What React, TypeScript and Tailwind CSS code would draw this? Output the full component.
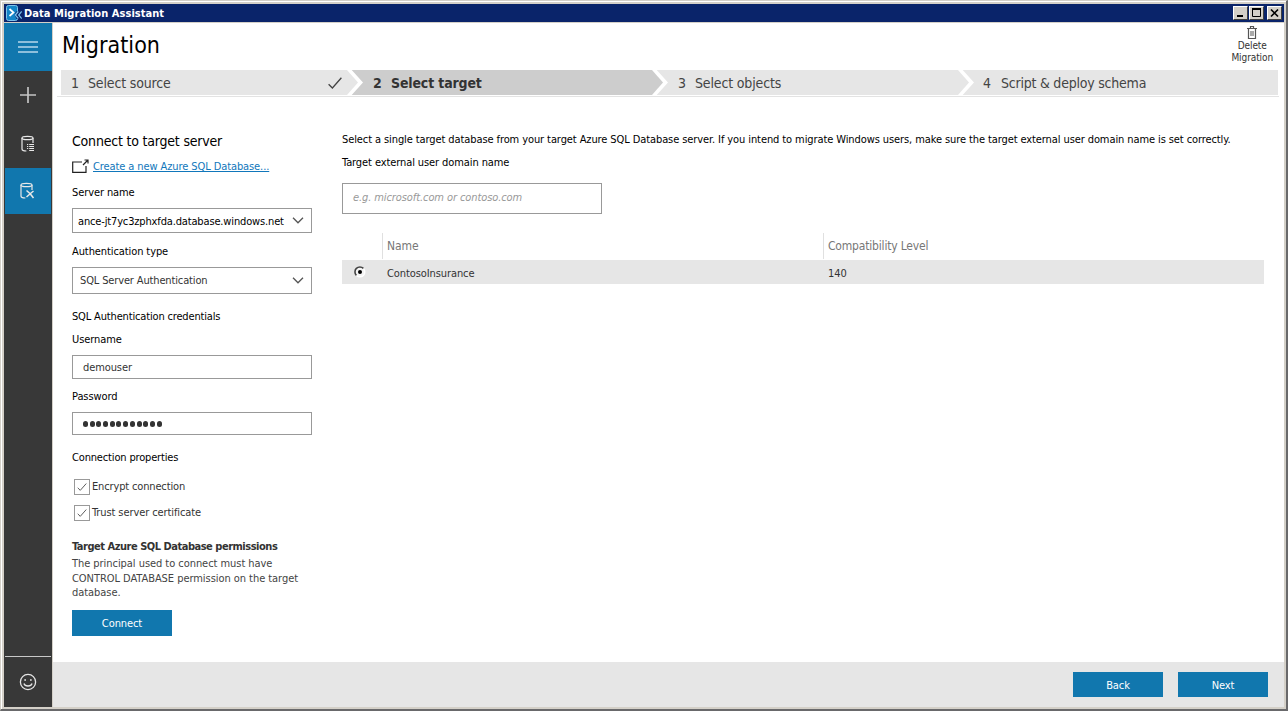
import React from "react";

const Check = ({ className = "" }: { className?: string }) => (
  <svg className={className} viewBox="0 0 14 12" fill="none" stroke="currentColor" strokeWidth="1.3">
    <path d="M0.6 7.2 L4.4 11 L13.4 0.8" />
  </svg>
);

const ChevronDown = () => (
  <svg className="h-[7px] w-[12px] shrink-0 text-[#555]" viewBox="0 0 12 7" fill="none" stroke="currentColor" strokeWidth="1.3">
    <path d="M1 0.8 L6 5.8 L11 0.8" />
  </svg>
);

const Divider = ({ left, right }: { left: string; right: string }) => (
  <svg className="h-[25px] w-[17px] shrink-0" viewBox="0 0 17 25">
    <path d="M0 0 L1 0 L12 12.5 L1 25 L0 25 Z" fill={left} />
    <path d="M5.7 0 H17 V25 H5.7 L17 12.5 Z" fill={right} />
  </svg>
);

const Database = ({ children }: { children: React.ReactNode }) => (
  <svg className="h-[18px] w-[16px]" viewBox="0 0 16 18" fill="none" stroke="#e8e8e8" strokeWidth="1.2">
    <ellipse cx="7.5" cy="3" rx="5.5" ry="1.7" />
    <path d="M2 3 V14 C2 15.4 4 16 6.4 16 M13 3 V8" />
    {children}
  </svg>
);

const Label = ({ className = "", children }: { className?: string; children: React.ReactNode }) => (
  <div className={`flex h-4 items-center whitespace-nowrap ${className}`}>{children}</div>
);

const CheckRow = ({ className = "", children }: { className?: string; children: React.ReactNode }) => (
  <div className={`ml-[2px] flex h-4 items-center text-[#333] ${className}`}>
    <span className="flex h-4 w-4 items-center justify-center border border-[#999]">
      <Check className="h-[8px] w-[10px] text-[#444]" />
    </span>
    <span className="ml-[2px] whitespace-nowrap">{children}</span>
  </div>
);

const WinButton = ({ className = "", children }: { className?: string; children: React.ReactNode }) => (
  <button
    className={`flex h-[14px] w-[15px] items-center justify-center border border-t-white border-r-[#404040] border-b-[#404040] border-l-white bg-[#d4d0c8] ${className}`}
  >
    {children}
  </button>
);

export default function App() {
  return (
    <div className="flex h-[711px] w-[1288px] flex-col overflow-hidden border-t border-r-2 border-b-2 border-l border-t-[#d4d0c8] border-r-[#69696b] border-b-[#69696b] border-l-[#d4d0c8] font-['DejaVu_Sans_Condensed','DejaVu_Sans',sans-serif] text-[11px] leading-[14px] tracking-[-0.095px] text-black">
      <div className="flex min-h-0 flex-1 flex-col border-t border-l border-white">
        <div className="flex min-h-0 flex-1 flex-col border-2 border-[#d4d0c8]">
          <header className="flex h-[18px] shrink-0 items-center bg-[#0a246a] pr-[2px] pl-[2px]">
            <svg className="h-4 w-4 shrink-0" viewBox="0 0 16 16" fill="none">
              <rect x="0.5" y="0.5" width="11" height="15" rx="2" fill="#1485c7" stroke="#7fc4ec" />
              <path d="M10 6.5 H16 V14 H10.5 L8.5 10 Z" fill="#0a246a" />
              <path d="M3.5 4 L7.5 7.5 L3.5 11" stroke="#fff" strokeWidth="1.7" />
              <path d="M12.3 6.5 L9.3 10 L12.3 13.5 M15.7 6.5 L12.7 10 L15.7 13.5" stroke="#79c3ec" strokeWidth="1.2" />
            </svg>
            <span className="ml-[2px] flex-1 pt-px text-[11px] font-bold tracking-[0.05px] whitespace-nowrap text-white">Data Migration Assistant</span>
            <WinButton>
              <svg className="h-[10px] w-[11px]" viewBox="0 0 11 10">
                <path d="M2 8 H8" stroke="#000" strokeWidth="2" />
              </svg>
            </WinButton>
            <WinButton className="ml-px">
              <svg className="h-[10px] w-[11px]" viewBox="0 0 11 10" fill="none" stroke="#000">
                <path d="M1.5 1 V8.5 H9.5 V1" />
                <path d="M1 1 H10" strokeWidth="2" />
              </svg>
            </WinButton>
            <WinButton className="ml-[3px]">
              <svg className="h-[10px] w-[11px]" viewBox="0 0 11 10">
                <path d="M2 1.5 L9 8.5 M9 1.5 L2 8.5" stroke="#000" strokeWidth="1.7" />
              </svg>
            </WinButton>
          </header>

          <div className="flex min-h-0 flex-1 border-t border-[#d4d0c8]">
            <nav className="flex w-12 shrink-0 flex-col bg-[#383838]">
              <button className="flex h-12 items-center justify-center bg-[#1177ae]">
                <svg className="h-3 w-5" viewBox="0 0 20 12" stroke="#8dbfdc" strokeWidth="2">
                  <path d="M0 1 H20 M0 6 H20 M0 11 H20" />
                </svg>
              </button>
              <button className="flex h-12 items-center justify-center">
                <svg className="h-4 w-4" viewBox="0 0 16 16" stroke="#c4c4c4" strokeWidth="1.7">
                  <path d="M8 0 V16 M0 8 H16" />
                </svg>
              </button>
              <button className="flex h-[49px] items-center justify-center">
                <Database>
                  <path d="M7 9.5 H8.2 M9.2 9.5 H14 M7 11.5 H8.2 M9.2 11.5 H14 M7 13.5 H8.2 M9.2 13.5 H14 M9.2 15.5 H14" strokeWidth="1" />
                </Database>
              </button>
              <button className="mx-px flex h-[46px] items-center justify-center bg-[#1177ae] pr-[2px]">
                <Database>
                  <path d="M7.5 8.5 L11.2 11.8 L7.5 15 M14.5 9 L11.2 11.8 L14.5 16" strokeWidth="1.5" />
                </Database>
              </button>
              <div className="mx-px mt-auto border-t border-[#c8c8c8]" />
              <button className="flex h-[50px] items-center justify-center">
                <svg className="h-[18px] w-[18px]" viewBox="0 0 18 18" fill="none" stroke="#e4e4e4" strokeWidth="1.3">
                  <circle cx="9" cy="9" r="7.6" />
                  <path d="M4.9 10.5 C6 13.8 12 13.8 13.1 10.5" />
                  <path d="M5.3 7 H7 M11 7 H12.7" strokeWidth="1.7" />
                </svg>
              </button>
            </nav>

            <div className="flex min-w-0 flex-1 flex-col border-l border-[#d4d0c8] bg-white">
              <div className="flex h-[47px] shrink-0 justify-between pr-[11px] pl-[9px]">
                <h1 className="pt-[6px] text-[23px] leading-8 tracking-[0.05px] whitespace-nowrap">Migration</h1>
                <button className="flex flex-col items-center pt-[3px] text-[10px] leading-[12px] text-[#333]">
                  <svg className="mb-px h-[13px] w-[10px]" viewBox="0 0 10 13" fill="none" stroke="#555">
                    <path d="M0 2.5 H10 M3.5 2 V0.5 H6.5 V2 M1.5 2.5 V12.5 H8.5 V2.5" strokeWidth="1.2" />
                    <path d="M4 5 V10 M6 5 V10" />
                  </svg>
                  <span>Delete</span>
                  <span>Migration</span>
                </button>
              </div>

              <div className="mr-[5px] ml-1 border-b border-[#e3e3e3] pb-px">
                <ol className="mr-px ml-1 flex h-[25px] text-[14px] leading-[26px] tracking-[-0.22px] whitespace-nowrap text-[#444]">
                  <li className="flex w-[285px] items-center bg-[#e6e6e6] pl-[10px]">
                    <span className="w-[17px]">1</span>
                    <span className="flex-1 tracking-[-0.15px]">Select source</span>
                    <Check className="mr-[4px] h-[12px] w-[14px]" />
                  </li>
                  <Divider left="#e6e6e6" right="#cdcdcd" />
                  <li className="flex w-[288px] bg-[#cdcdcd] pl-[10px] font-bold text-[#333]">
                    <span className="w-[18px]">2</span>
                    <span className="tracking-[-0.15px]">Select target</span>
                  </li>
                  <Divider left="#cdcdcd" right="#e6e6e6" />
                  <li className="flex w-[289px] bg-[#e6e6e6] pl-[10px]">
                    <span className="w-[17px]">3</span>
                    <span className="tracking-[-0.15px]">Select objects</span>
                  </li>
                  <Divider left="#e6e6e6" right="#e6e6e6" />
                  <li className="flex flex-1 bg-[#e6e6e6] pl-[9px]">
                    <span className="w-[18px]">4</span>
                    <span>Script &amp; deploy schema</span>
                  </li>
                </ol>
              </div>

              <main className="flex min-h-0 flex-1 pl-[19px]">
                <section className="flex w-[240px] shrink-0 flex-col pt-[34px]">
                  <h2 className="flex h-5 items-center text-[14px] tracking-[-0.2px] whitespace-nowrap">Connect to target server</h2>
                  <div className="mt-[8px] flex h-4 items-center">
                    <svg className="-mt-px h-[15px] w-[17px]" viewBox="0 0 17 15" fill="none" stroke="#222" strokeWidth="1.2">
                      <path d="M10 3 H0.7 V13.4 H14 V7" />
                      <path d="M11 6 L16 1 M12.5 1 H16 V4.5" />
                    </svg>
                    <a className="ml-1 whitespace-nowrap text-[#1177bb] underline">Create a new Azure SQL Database...</a>
                  </div>
                  <Label className="mt-[10px]">Server name</Label>
                  <div className="mt-[7px] flex h-[25px] items-center justify-between border border-[#999] pr-[7px] pl-[5px]">
                    <span className="pt-[2px] tracking-[-0.15px] whitespace-nowrap">ance-jt7yc3zphxfda.database.windows.net</span>
                    <ChevronDown />
                  </div>
                  <Label className="mt-[11px]">Authentication type</Label>
                  <div className="mt-[7px] flex h-[27px] items-center justify-between border border-[#999] pr-[7px] pl-[7px] text-[#333]">
                    <span className="pt-px tracking-[-0.14px] whitespace-nowrap">SQL Server Authentication</span>
                    <ChevronDown />
                  </div>
                  <Label className="mt-[15px] tracking-[-0.16px]">SQL Authentication credentials</Label>
                  <Label className="mt-[7px]">Username</Label>
                  <div className="mt-[7px] flex h-6 items-center border border-[#999] pt-[2px] pl-[10px] text-[#333]">demouser</div>
                  <Label className="mt-[10px]">Password</Label>
                  <div className="mt-[7px] flex h-[23px] items-center gap-[1.7px] border border-[#999] pl-[10px]">
                    {Array.from({ length: 12 }, (_, i) => (
                      <span key={i} className="h-[6px] w-[5px] rounded-full bg-[#333]" />
                    ))}
                  </div>
                  <Label className="mt-[15px] tracking-[-0.16px]">Connection properties</Label>
                  <CheckRow className="mt-[13px] tracking-[-0.15px]">Encrypt connection</CheckRow>
                  <CheckRow className="mt-[10px]">Trust server certificate</CheckRow>
                  <Label className="mt-[18px] font-bold tracking-[-0.48px] text-[#333]">Target Azure SQL Database permissions</Label>
                  <p className="mt-[2px] text-[11px] leading-[14.5px] tracking-[-0.05px] whitespace-nowrap text-[#444]">
                    The principal used to connect must have
                    <br />
                    CONTROL DATABASE permission on the target
                    <br />
                    database.
                  </p>
                  <button className="mt-[9px] h-[26px] w-[100px] shrink-0 bg-[#1177ae] pt-[2px] text-white">Connect</button>
                </section>

                <section className="ml-[30px] w-[922px] pt-[35px]">
                  <Label>Select a single target database from your target Azure SQL Database server. If you intend to migrate Windows users, make sure the target external user domain name is set correctly.</Label>
                  <Label className="mt-[7px]">Target external user domain name</Label>
                  <div className="mt-[12px] flex h-[31px] w-[260px] items-center border border-[#999] pb-[2px] pl-[10px] text-[#999] italic">
                    e.g. microsoft.com or contoso.com
                  </div>
                  <div className="mt-[19px] grid h-[25px] grid-cols-[40px_441px_1fr] items-stretch leading-[26px] text-[#777]">
                    <span />
                    <span className="border-l border-[#e0e0e0] pl-1 text-[12px] tracking-[-0.1px]">Name</span>
                    <span className="border-l border-[#e0e0e0] pl-1 text-[12px] tracking-[-0.18px]">Compatibility Level</span>
                  </div>
                  <div className="mt-[2px] grid h-6 grid-cols-[40px_441px_1fr] items-center bg-[#e6e6e6] text-[#333]">
                    <svg className="ml-3 h-3 w-3" viewBox="0 0 12 12" fill="none">
                      <circle cx="6" cy="6" r="4.8" fill="#f4f4f4" stroke="#fff" strokeWidth="1.4" />
                      <path d="M2.4 9.4 A4.7 4.7 0 0 1 9.4 2.4" stroke="#444" strokeWidth="1.6" />
                      <circle cx="6" cy="6" r="2" fill="#000" />
                    </svg>
                    <span className="pt-[3px] pl-[5px]">ContosoInsurance</span>
                    <span className="pt-[3px] pl-[5px]">140</span>
                  </div>
                </section>
              </main>

              <footer className="flex h-[45px] shrink-0 items-start justify-end gap-[15px] bg-[#e6e6e6] pt-[10px] pr-[16px] text-white">
                <button className="h-[25px] w-[90px] bg-[#1177ae] pt-[2px]">Back</button>
                <button className="h-[25px] w-[90px] bg-[#1177ae] pt-[2px]">Next</button>
              </footer>
            </div>
          </div>
        </div>
      </div>
    </div>
  );
}
